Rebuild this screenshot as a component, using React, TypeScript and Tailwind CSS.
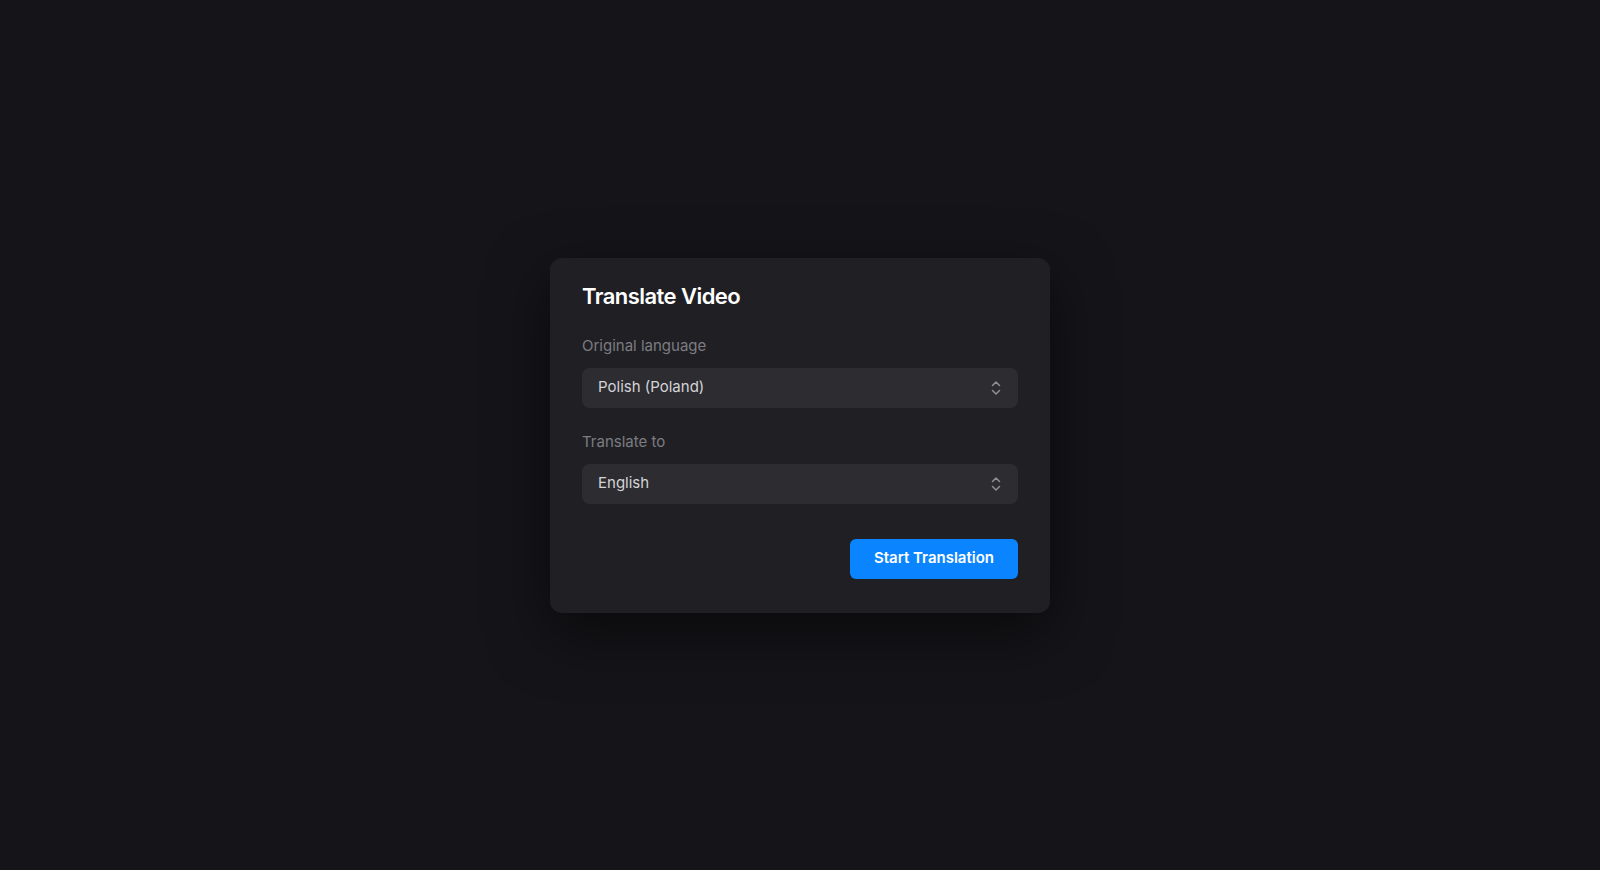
import React from 'react';

const Chevrons = () => (
  <svg width="12" height="18" viewBox="0 0 12 18" fill="none" className="text-[#8e8e93]">
    <path d="M2.5 6.5 6 3l3.5 3.5" stroke="currentColor" strokeWidth="1.5" strokeLinecap="round" strokeLinejoin="round" />
    <path d="M2.5 11.5 6 15l3.5-3.5" stroke="currentColor" strokeWidth="1.5" strokeLinecap="round" strokeLinejoin="round" />
  </svg>
);

const SelectField = ({ label, value }: { label: string; value: string }) => (
  <div className="flex flex-col">
    <label className="text-[15px] leading-5 text-[#7c7c82] mb-3">{label}</label>
    <button className="h-10 w-full rounded-lg bg-[#2c2c31] px-4 flex items-center justify-between text-left">
      <span className="text-[15px] text-[#d4d4d8]">{value}</span>
      <Chevrons />
    </button>
  </div>
);

const App = () => {
  return (
    <div
      className="min-h-screen w-full bg-[#151519] flex items-center justify-center"
      style={{ fontFamily: 'Inter, "Noto Sans", sans-serif' }}
    >
      <div className="w-[500px] rounded-xl bg-[#202024] px-8 pt-6 pb-[34px] shadow-[0_20px_60px_rgba(0,0,0,0.55)]">
        <h1 className="text-[22px] leading-7 font-semibold tracking-[-0.025em] text-white mb-[26px]">Translate Video</h1>

        <div className="flex flex-col gap-6">
          <SelectField label="Original language" value="Polish (Poland)" />
          <SelectField label="Translate to" value="English" />
        </div>

        {/* Actions */}
        <div className="flex justify-end mt-[35px]">
          <button className="h-10 px-6 rounded-md bg-[#0a84ff] text-white text-[15px] font-semibold">
            Start Translation
          </button>
        </div>
      </div>
    </div>
  );
};

export default App;
